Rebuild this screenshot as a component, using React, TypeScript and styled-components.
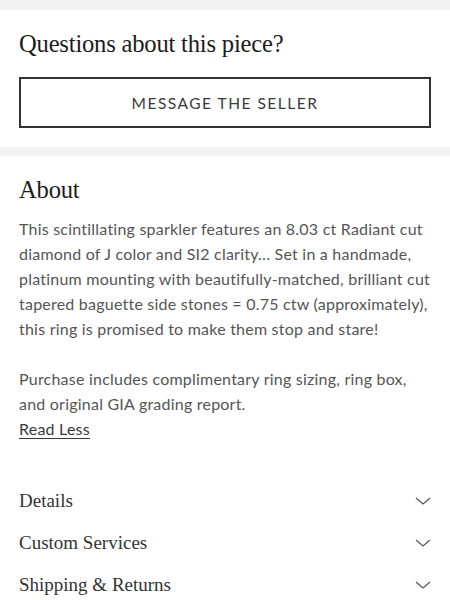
import React from "react";
import styled, { createGlobalStyle } from "styled-components";

const GlobalStyle = createGlobalStyle`
  html, body {
    margin: 0;
    padding: 0;
    background: #f2f2f2;
  }
  * {
    box-sizing: border-box;
  }
`;

const Page = styled.div`
  width: 450px;
  padding-top: 10px;
  background: #f2f2f2;
`;

const Section = styled.section`
  background: #ffffff;
  padding: 18px 19px 19px 19px;
  margin-bottom: 9px;
`;

const Heading = styled.h2`
  margin: 0;
  font-family: "Liberation Serif", "DejaVu Serif", serif;
  font-weight: 400;
  font-size: 24.6px;
  line-height: 32px;
  color: #1c1c1c;
  letter-spacing: -0.2px;
`;

const OutlineButton = styled.button`
  display: block;
  width: 100%;
  height: 51px;
  margin-top: 17px;
  border: 2px solid #333333;
  background: #ffffff;
  font-family: "Lato", "Liberation Sans", sans-serif;
  font-size: 15.5px;
  letter-spacing: 1.5px;
  color: #3a3a3a;
  text-transform: uppercase;
  cursor: pointer;
`;

const Body = styled.div`
  margin-top: 10px;
  font-family: "Lato", "Liberation Sans", sans-serif;
  font-size: 16px;
  letter-spacing: 0.22px;
  line-height: 25px;
  color: #555555;

  p {
    margin: 0 0 25px 0;
  }
  p:last-of-type {
    margin-bottom: 0;
  }
`;

const ReadLess = styled.a`
  display: inline-block;
  color: #3a3a3a;
  text-decoration: underline;
  text-underline-offset: 3px;
  cursor: pointer;
`;

const AccordionList = styled.div`
  margin-top: 39px;
`;

const AccordionRow = styled.div`
  display: flex;
  align-items: center;
  justify-content: space-between;
  height: 42px;
`;

const RowLabel = styled.span`
  font-family: "Liberation Serif", "DejaVu Serif", serif;
  font-size: 19px;
  color: #333333;
`;

const Chevron = () => (
  <svg width="16" height="10" viewBox="0 0 16 10" fill="none">
    <path d="M1 2 L8 8 L15 2" stroke="#555" strokeWidth="1.2" />
  </svg>
);

const rows = ["Details", "Custom Services", "Shipping & Returns"];

export default function App() {
  return (
    <Page>
      <GlobalStyle />
      <Section>
        <Heading>Questions about this piece?</Heading>
        <OutlineButton>Message the Seller</OutlineButton>
      </Section>
      <Section>
        <Heading>About</Heading>
        <Body>
          <p>
            This scintillating sparkler features an 8.03 ct Radiant cut diamond of J color and SI2
            clarity… Set in a handmade, platinum mounting with beautifully-matched, brilliant cut
            tapered baguette side stones = 0.75 ctw (approximately), this ring is promised to make
            them stop and stare!
          </p>
          <p>
            Purchase includes complimentary ring sizing, ring box, and original GIA grading report.
          </p>
          <ReadLess>Read Less</ReadLess>
        </Body>
        <AccordionList>
          {rows.map((r) => (
            <AccordionRow key={r}>
              <RowLabel>{r}</RowLabel>
              <Chevron />
            </AccordionRow>
          ))}
        </AccordionList>
      </Section>
    </Page>
  );
}
